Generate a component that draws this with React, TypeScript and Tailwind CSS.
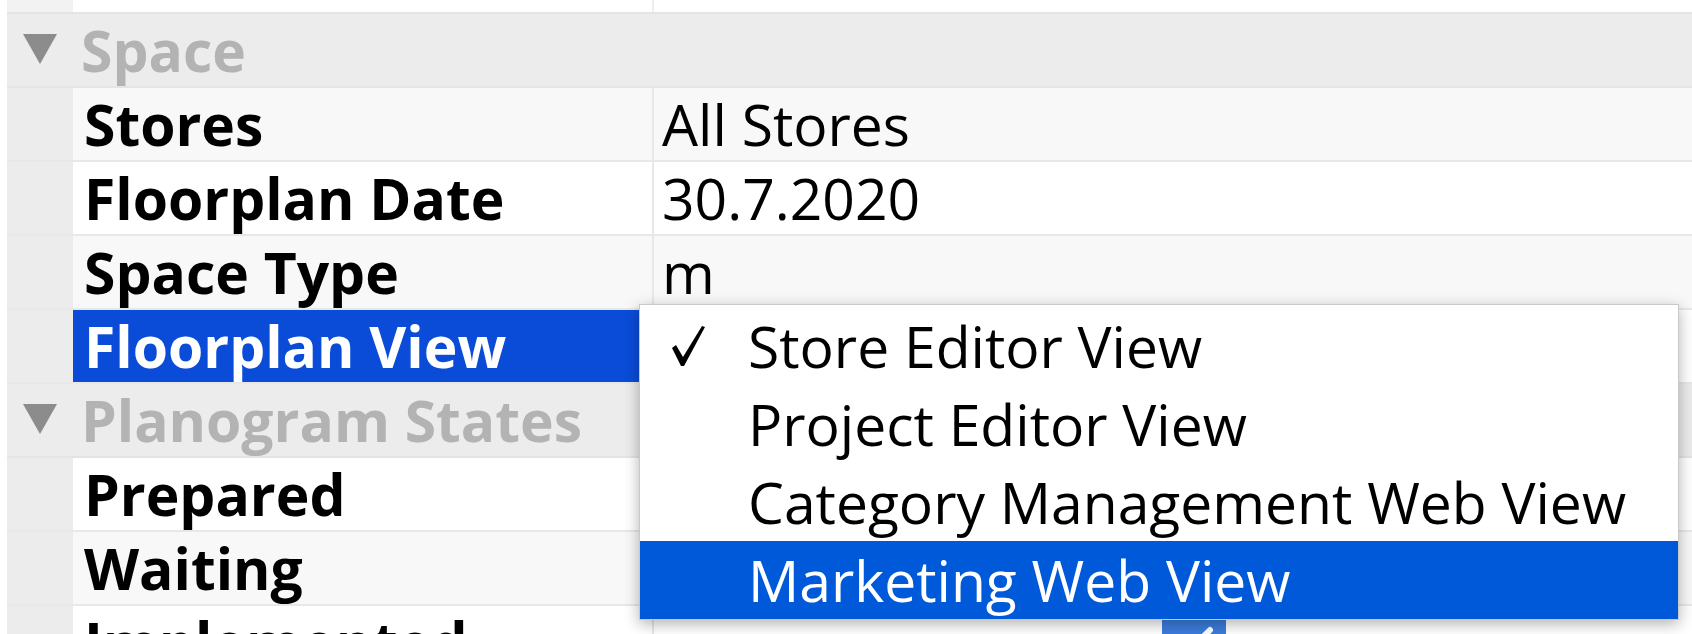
import { Check } from "lucide-react"

type Row =
  | { kind: "header"; label: string }
  | { kind: "prop"; label: string; value?: string; selected?: boolean; shade?: boolean; checkbox?: boolean }

const rows: Row[] = [
  { kind: "header", label: "Space" },
  { kind: "prop", label: "Stores", value: "All Stores", shade: true },
  { kind: "prop", label: "Floorplan Date", value: "30.7.2020" },
  { kind: "prop", label: "Space Type", value: "m", shade: true },
  { kind: "prop", label: "Floorplan View", selected: true },
  { kind: "header", label: "Planogram States" },
  { kind: "prop", label: "Prepared" },
  { kind: "prop", label: "Waiting", shade: true },
  { kind: "prop", label: "Implemented", checkbox: true },
]

const options = [
  "Store Editor View",
  "Project Editor View",
  "Category Management Web View",
  "Marketing Web View",
]

function Triangle() {
  return (
    <svg width="34" height="32" viewBox="0 0 34 32" className="shrink-0">
      <polygon points="0,0 34,0 17,30" fill="#8c8c8c" />
    </svg>
  )
}

function CheckMark() {
  return (
    <svg width="36" height="44" viewBox="0 0 36 44">
      <path d="M2 24 L6 21 L13 33 L32 2 L35 3 L14 42 L11 42 Z" fill="#000" />
    </svg>
  )
}

function PropRow({ row }: { row: Extract<Row, { kind: "prop" }> }) {
  const bg = row.shade ? "bg-[#f8f8f8]" : "bg-white"
  return (
    <div className="flex h-[74px] border-b-2 border-[#e8e8e8]">
      <div className="w-[66px] shrink-0 bg-[#ececec]" />
      <div
        className={`flex w-[579px] shrink-0 items-center pl-[11px] text-[57px] font-bold ${
          row.selected ? "bg-[#0a4cd8] text-white" : `${bg} text-black`
        }`}
      >
        {row.label}
      </div>
      <div className={`flex flex-1 items-center border-l-2 border-[#e8e8e8] pl-[8px] text-[57px] text-black ${bg}`}>
        {row.value}
        {row.checkbox && (
          <div className="ml-[500px] flex h-[64px] w-[64px] items-center justify-center rounded-[8px] bg-[#3b7ddd]">
            <Check className="h-12 w-12 text-white" strokeWidth={3} />
          </div>
        )}
      </div>
    </div>
  )
}

export default function App() {
  return (
    <div className="relative h-[634px] w-[1692px] overflow-hidden bg-white pl-[7px] font-['Open_Sans',sans-serif] leading-none">
      {/* row above, mostly scrolled out */}
      <div className="flex h-[14px] border-b-2 border-[#e4e4e4]">
        <div className="w-[66px] bg-[#f2f2f2]" />
        <div className="w-[579px] bg-white" />
        <div className="flex-1 border-l-2 border-[#ededed] bg-white" />
      </div>

      {rows.map((row, i) =>
        row.kind === "header" ? (
          <div key={i} className="flex h-[74px] items-center gap-[24px] border-b-2 border-[#e4e4e4] bg-[#ececec] pl-[16px]">
            <Triangle />
            <span className="text-[57px] font-bold text-[#b3b3b3]">{row.label}</span>
          </div>
        ) : (
          <PropRow key={i} row={row} />
        )
      )}

      {/* popup menu */}
      <div className="absolute left-[639px] top-[304px] w-[1040px] border border-[#c9c9c9] bg-white pt-[2px] shadow-[0_4px_14px_rgba(0,0,0,0.3)]">
        {options.map((opt, i) => (
          <div
            key={opt}
            className={`flex h-[78px] items-center text-[57px] ${
              i === 3 ? "bg-[#0059d9] text-white" : "text-black"
            }`}
          >
            <span className="flex w-[108px] shrink-0 items-center pl-[30px]">{i === 0 && <CheckMark />}</span>
            {opt}
          </div>
        ))}
      </div>
    </div>
  )
}
